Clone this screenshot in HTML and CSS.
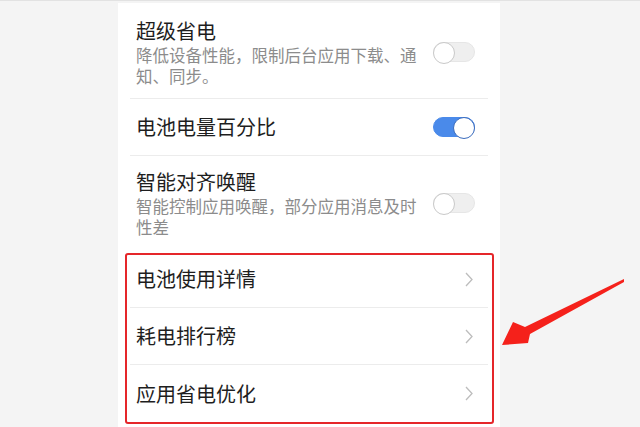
FILE: index.html
```html
<!DOCTYPE html>
<html lang="zh-CN">
<head>
    <meta charset="UTF-8">
    <meta name="viewport" content="width=device-width, initial-scale=1.0">
    <title>电池</title>
    <link rel="stylesheet" href="styles.css">
</head>
<body>
    <div class="panel">
        <div class="row row-sub first">
            <div class="text">
                <div class="title">超级省电</div>
                <div class="desc">降低设备性能，限制后台应用下载、通知、同步。</div>
            </div>
            <span class="switch"></span>
        </div>
        <div class="row row-plain">
            <div class="title">电池电量百分比</div>
            <span class="switch on"></span>
        </div>
        <div class="row row-sub last">
            <div class="text">
                <div class="title">智能对齐唤醒</div>
                <div class="desc">智能控制应用唤醒，部分应用消息及时性差</div>
            </div>
            <span class="switch"></span>
        </div>
        <div class="group">
            <div class="row row-link">
                <div class="title">电池使用详情</div>
                <svg class="chevron" width="8" height="15" viewBox="0 0 8 15"><polyline points="1,1 7,7.5 1,14" /></svg>
            </div>
            <div class="row row-link">
                <div class="title">耗电排行榜</div>
                <svg class="chevron" width="8" height="15" viewBox="0 0 8 15"><polyline points="1,1 7,7.5 1,14" /></svg>
            </div>
            <div class="row row-link">
                <div class="title">应用省电优化</div>
                <svg class="chevron" width="8" height="15" viewBox="0 0 8 15"><polyline points="1,1 7,7.5 1,14" /></svg>
            </div>
        </div>
    </div>
    <svg class="arrow" width="640" height="427" viewBox="0 0 640 427">
        <polygon points="624,279 525,327 513,322 502,345 528,343 530,334 624,282" />
    </svg>
</body>
</html>
```

FILE: styles.css
```css
*{
    margin: 0;
    padding: 0;
    box-sizing: border-box;
}
body {
    background-color: #f4f4f4;
    font-family: "Noto Sans CJK SC", "Noto Sans", sans-serif;
    color: #1e1e1e;
    height: 427px;
    overflow: hidden;
    border-top: 1px solid #e2e2e2;
}
.panel {
    margin-left: 118px;
    margin-top: 2px;
    width: 382px;
    height: 430px;
    padding: 0 12px;
    background-color: #fff;
}
.row {
    display: flex;
    align-items: center;
    justify-content: space-between;
    padding: 0 13px 0 6px;
    border-bottom: 1px solid #ececec;
}
.title {
    font-size: 20px;
    line-height: 28px;
}
.desc {
    width: 290px;
    font-size: 16.5px;
    line-height: 21px;
    color: #8c8c8c;
}
.row-sub.first {
    padding-top: 14px;
    padding-bottom: 11px;
}
.row-sub.last {
    padding-top: 12px;
    padding-bottom: 13px;
    border-bottom: none;
}
.row-plain {
    height: 57px;
}
.switch {
    position: relative;
    width: 42px;
    height: 20px;
    border-radius: 10px;
    background-color: #efefef;
    border: 1px solid #e6e6e6;
}
.switch::after {
    content: "";
    position: absolute;
    top: -1px;
    left: -1px;
    width: 20px;
    height: 20px;
    border-radius: 50%;
    background-color: #fff;
    border: 1.5px solid #c9c9c9;
}
.switch.on {
    background-color: #4a8aea;
    border-color: #4a8aea;
}
.switch.on::after {
    left: auto;
    right: -1px;
    border-color: #3b6cbd;
}
.group {
    position: relative;
}
.group::before {
    content: "";
    position: absolute;
    top: 2px;
    bottom: -2px;
    left: -5px;
    right: -6px;
    border: 2px solid #e5262a;
    border-radius: 3px;
}
.row-link {
    height: 57px;
    padding-right: 15px;
}
.row-link:last-child {
    border-bottom: none;
}
.chevron polyline {
    fill: none;
    stroke: #bdbdbd;
    stroke-width: 1.3;
}
.arrow {
    position: absolute;
    top: 0;
    left: 0;
}
.arrow polygon {
    fill: #f5211b;
}
```
